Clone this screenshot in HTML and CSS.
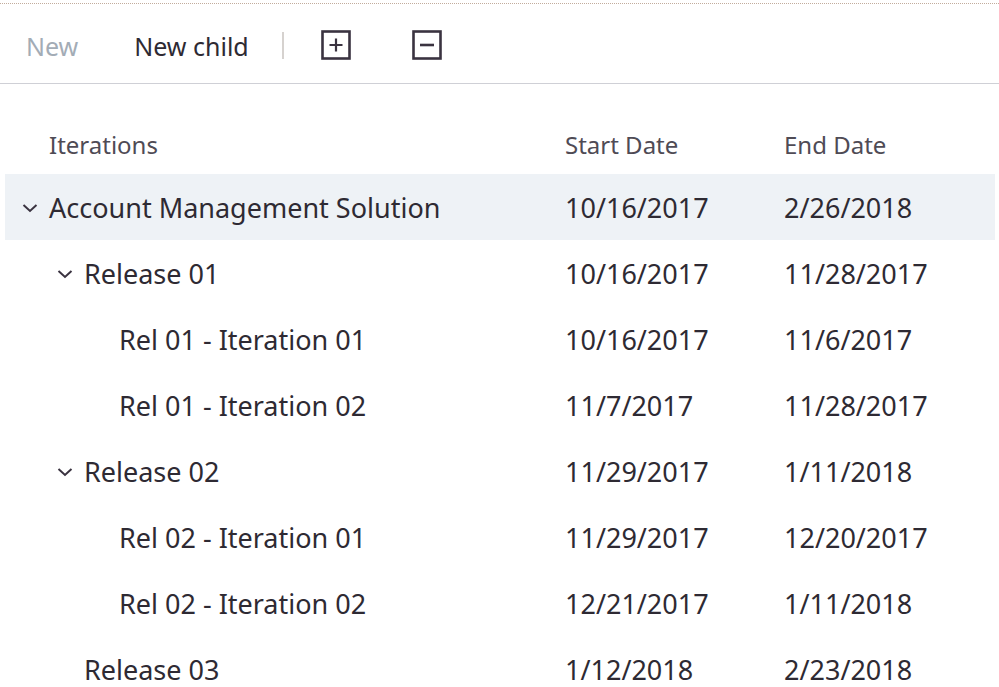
FILE: index.html
```html
<!DOCTYPE html>
<html>
<head>
<meta charset="utf-8">
<link rel="stylesheet" href="styles.css">
</head>
<body>
<div class="page">
  <div class="toolbar">
    <span class="tb-item disabled">New</span>
    <span class="tb-item">New child</span>
    <span class="tb-sep"></span>
    <span class="tb-icon plus" title="Expand all">
      <svg width="30" height="30" viewBox="0 0 30 30"><rect x="1.5" y="1.5" width="27" height="27" fill="none" stroke="#3a3340" stroke-width="2.6"/><path d="M8.5 15h13M15 8.5v13" stroke="#3a3340" stroke-width="2.2" fill="none"/></svg>
    </span>
    <span class="tb-icon minus" title="Collapse all">
      <svg width="30" height="30" viewBox="0 0 30 30"><rect x="1.5" y="1.5" width="27" height="27" fill="none" stroke="#3a3340" stroke-width="2.6"/><path d="M8 15h14" stroke="#3a3340" stroke-width="2.6" fill="none"/></svg>
    </span>
  </div>

  <div class="grid">
    <div class="row head">
      <div class="cell name lvl0"><span class="chev-space"></span>Iterations</div>
      <div class="cell">Start Date</div>
      <div class="cell">End Date</div>
    </div>

    <div class="row selected">
      <div class="cell name lvl0"><span class="chev"><svg width="16" height="10" viewBox="0 0 16 10"><path d="M1.5 2l6.5 6 6.5-6" fill="none" stroke="#3a3340" stroke-width="2"/></svg></span>Account Management Solution</div>
      <div class="cell">10/16/2017</div>
      <div class="cell">2/26/2018</div>
    </div>

    <div class="row">
      <div class="cell name lvl1"><span class="chev"><svg width="16" height="10" viewBox="0 0 16 10"><path d="M1.5 2l6.5 6 6.5-6" fill="none" stroke="#3a3340" stroke-width="2"/></svg></span>Release 01</div>
      <div class="cell">10/16/2017</div>
      <div class="cell">11/28/2017</div>
    </div>

    <div class="row">
      <div class="cell name lvl2"><span class="chev-space"></span>Rel 01 - Iteration 01</div>
      <div class="cell">10/16/2017</div>
      <div class="cell">11/6/2017</div>
    </div>

    <div class="row">
      <div class="cell name lvl2"><span class="chev-space"></span>Rel 01 - Iteration 02</div>
      <div class="cell">11/7/2017</div>
      <div class="cell">11/28/2017</div>
    </div>

    <div class="row">
      <div class="cell name lvl1"><span class="chev"><svg width="16" height="10" viewBox="0 0 16 10"><path d="M1.5 2l6.5 6 6.5-6" fill="none" stroke="#3a3340" stroke-width="2"/></svg></span>Release 02</div>
      <div class="cell">11/29/2017</div>
      <div class="cell">1/11/2018</div>
    </div>

    <div class="row">
      <div class="cell name lvl2"><span class="chev-space"></span>Rel 02 - Iteration 01</div>
      <div class="cell">11/29/2017</div>
      <div class="cell">12/20/2017</div>
    </div>

    <div class="row">
      <div class="cell name lvl2"><span class="chev-space"></span>Rel 02 - Iteration 02</div>
      <div class="cell">12/21/2017</div>
      <div class="cell">1/11/2018</div>
    </div>

    <div class="row">
      <div class="cell name lvl1"><span class="chev-space"></span>Release 03</div>
      <div class="cell">1/12/2018</div>
      <div class="cell">2/23/2018</div>
    </div>
  </div>
</div>
</body>
</html>
```

FILE: styles.css
```css
* { box-sizing: border-box; }
html, body {
  margin: 0;
  padding: 0;
  background: #ffffff;
  overflow: hidden;
}
body {
  font-family: "Noto Sans", "Open Sans", sans-serif;
  color: #2e2a33;
}
.page {
  width: 999px;
  height: 687px;
  padding-top: 3px;
}
.toolbar {
  border-top: 1px dotted #c2ac9c;
  border-bottom: 1px solid #cfd0d6;
  height: 81px;
  display: flex;
  align-items: center;
  padding-left: 26px;
  padding-top: 4px;
  font-size: 25px;
}
.tb-item { white-space: nowrap; }
.tb-item.disabled { color: #a3acb6; margin-right: 56px; }
.tb-sep {
  width: 2px;
  height: 27px;
  background: #d6d2cf;
  margin-left: 33px;
  margin-right: 37px;
}
.tb-icon { display: flex; margin-top: -2px; }
.tb-icon.plus { margin-right: 61px; }
.grid {
  display: flex;
  flex-direction: column;
  padding-top: 24px;
}
.row {
  display: grid;
  grid-template-columns: 565px 219px 1fr;
  align-items: center;
  height: 66px;
  font-size: 27px;
  margin: 0 4px 0 5px;
}
.row .cell:first-child { margin-left: -5px; }
.row.head {
  font-size: 24px;
  color: #4f4b55;
  height: 66px;
  padding-top: 6px;
}
.row.selected { background: #eef2f6; }
.cell { white-space: nowrap; display: flex; align-items: center; }
.cell:nth-child(2) { margin-left: -5px; }
.cell:nth-child(3) { margin-left: -5px; }
.name.lvl0 { padding-left: 18px; }
.name.lvl1 { padding-left: 53px; }
.name.lvl2 { padding-left: 88px; }
.chev, .chev-space {
  width: 31px;
  flex: none;
  display: flex;
  align-items: center;
}
.chev svg { margin-left: 4px; margin-top: 2px; }
```
